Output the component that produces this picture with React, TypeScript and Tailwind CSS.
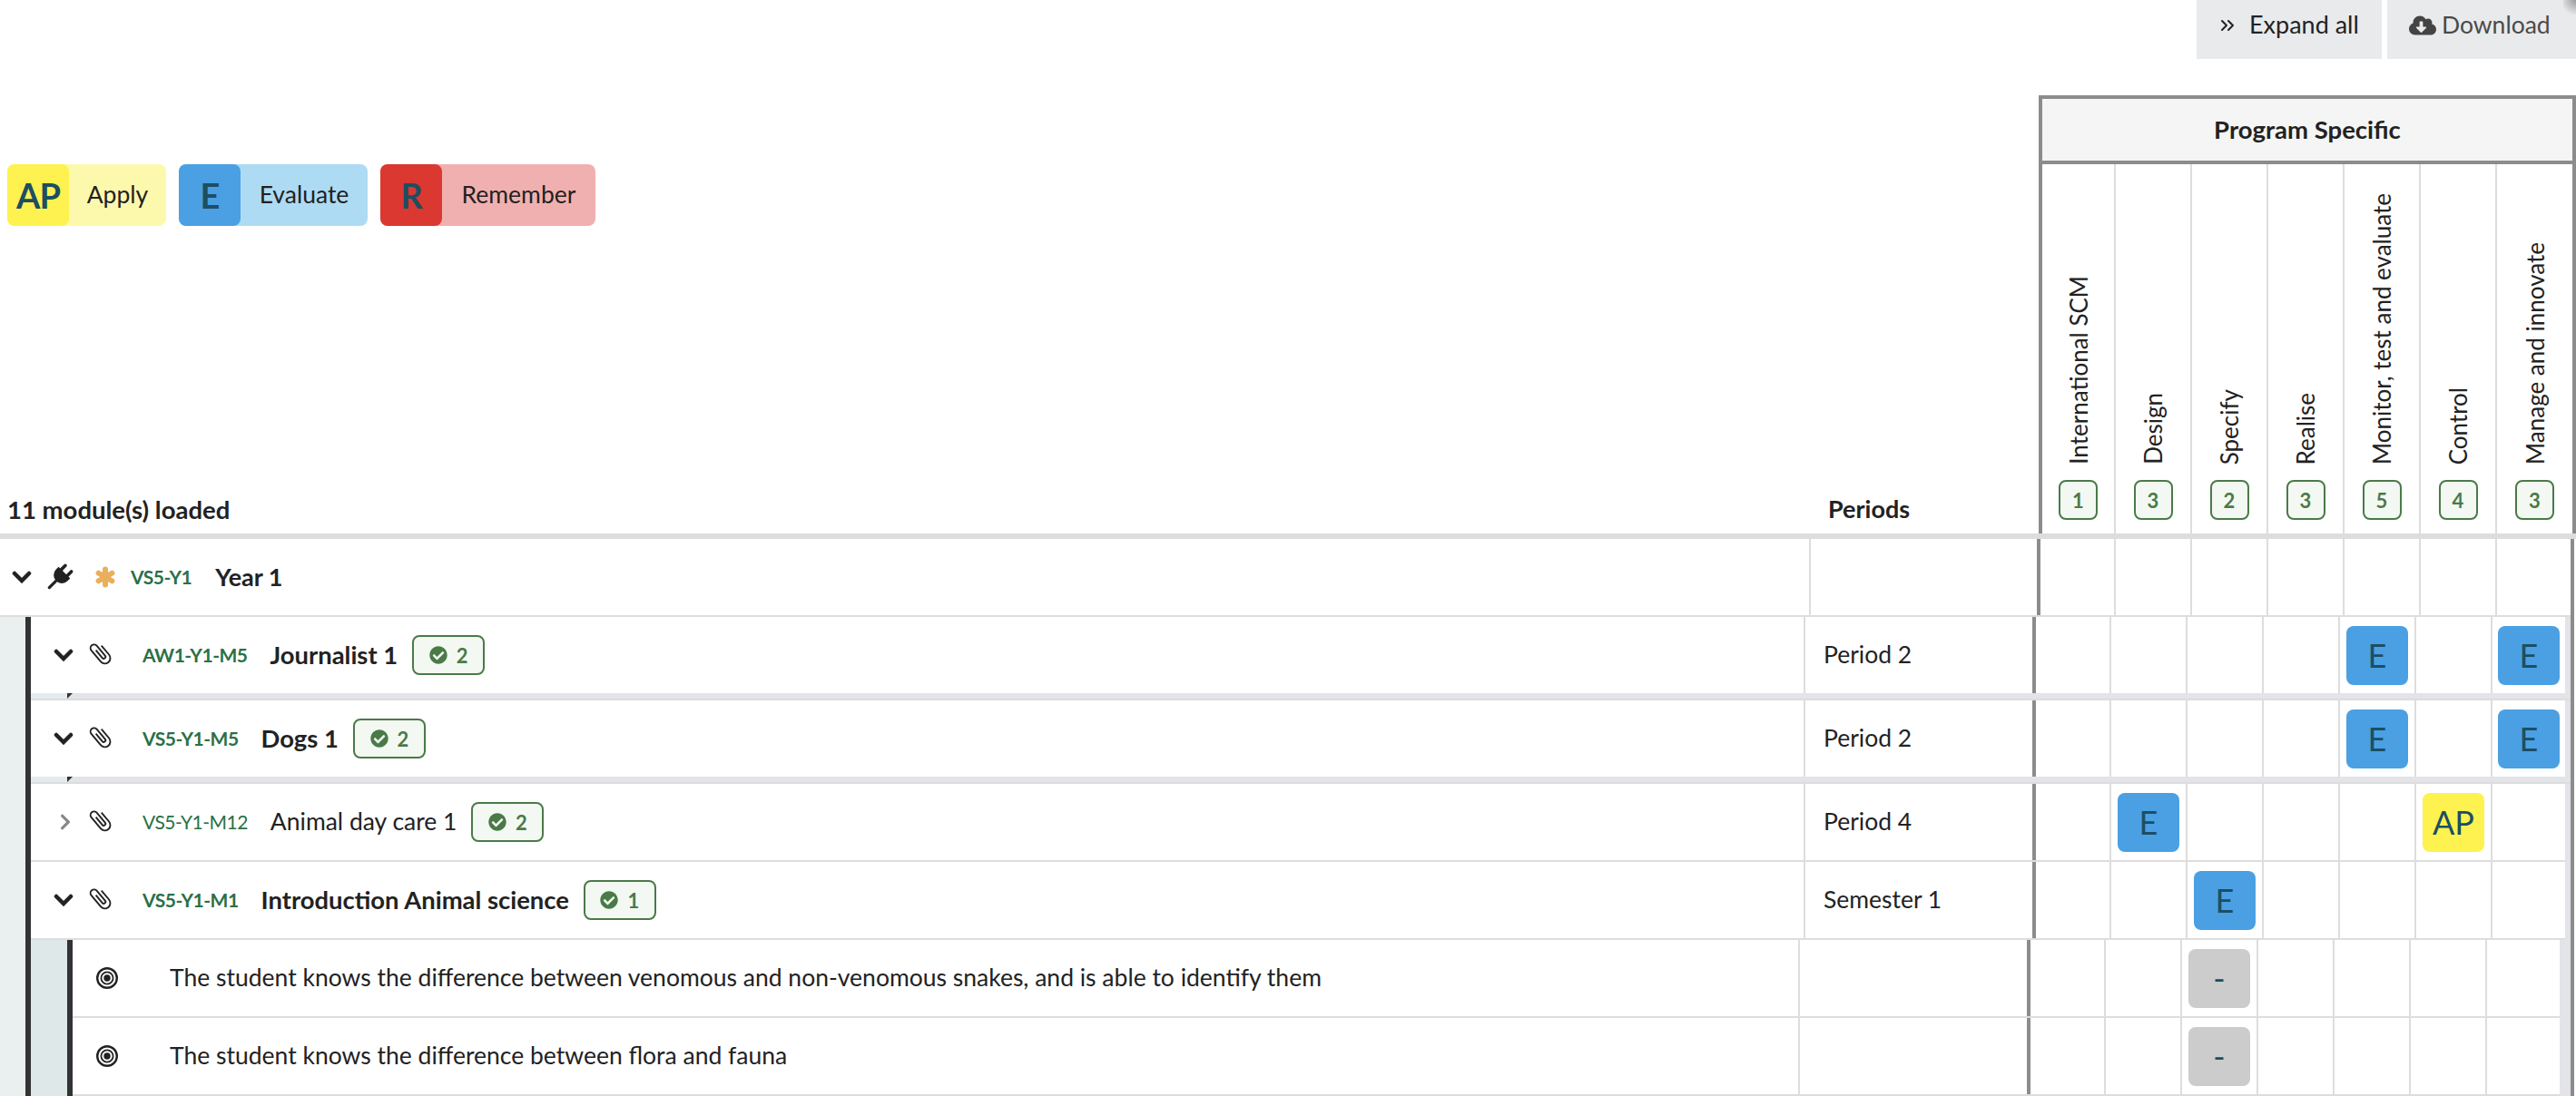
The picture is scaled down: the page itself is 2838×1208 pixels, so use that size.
import React from 'react';
import { FaChevronRight, FaCheckCircle, FaCloudDownloadAlt } from 'react-icons/fa';
import { LuChevronsRight } from 'react-icons/lu';

const font = "font-['Lato','Noto_Sans',sans-serif]";

const Chevron = () => (
  <svg width="22" height="14" viewBox="0 0 22 14" fill="none" stroke="#222222" strokeWidth="4.5" strokeLinecap="round" strokeLinejoin="miter">
    <path d="M3 3l8 8 8-8" />
  </svg>
);

const Clip = () => (
  <svg width="30" height="30" viewBox="-3 0 30 30" fill="none" stroke="#222222" strokeWidth="1.9" className="overflow-visible">
    <path transform="rotate(-40 12 15)" d="M10 9V20a2 2 0 0 0 4 0V6a4 4 0 0 0-8 0V22a6 6 0 0 0 12 0V9" />
  </svg>
);

const Plug = () => (
  <svg width="30" height="30" viewBox="0 0 30 30" className="overflow-visible">
    <g transform="rotate(45 15 15)" fill="#222222">
      <rect x="8.5" y="0" width="3.6" height="10" rx="1.8" />
      <rect x="17.9" y="0" width="3.6" height="10" rx="1.8" />
      <path d="M6 8H24V12A9 9 0 0 1 6 12Z" />
      <rect x="13.4" y="20" width="3.2" height="13" rx="1.2" />
    </g>
  </svg>
);

const Star = () => (
  <svg width="24" height="24" viewBox="0 0 24 24" stroke="#e9af5d" strokeWidth="6" strokeLinecap="round">
    <path d="M12 3.5V20.5" />
    <path d="M4.6 7.75L19.4 16.25" />
    <path d="M19.4 7.75L4.6 16.25" />
  </svg>
);

const Target = () => (
  <svg width="24" height="24" viewBox="0 0 24 24" fill="none" stroke="#222222">
    <circle cx="12" cy="12" r="10.8" strokeWidth="2.4" />
    <circle cx="12" cy="12" r="6.6" strokeWidth="1.8" />
    <circle cx="12" cy="12" r="3.7" fill="#222222" stroke="none" />
  </svg>
);

const Chip = ({ v }: { v?: string }) => {
  if (!v) return null;
  const bg = v === 'E' ? 'bg-[#4aa0e2]' : v === 'AP' ? 'bg-[#fdf24f]' : 'bg-[#cccccc]';
  return (
    <div className={`${bg} w-[68px] h-[65px] rounded-lg flex items-center justify-center text-[36px] text-[#1d4e63]`}>
      {v}
    </div>
  );
};

const Matrix = ({ cells, lastWidth = 'w-[82px]' }: { cells: (string | undefined)[]; lastWidth?: string }) => (
  <div className="flex h-full border-l-4 border-[#8c8c8c]">
    {cells.map((c, i) => (
      <div
        key={i}
        className={`h-full flex items-center justify-center ${i === 0 ? 'w-[81px]' : i === 6 ? `${lastWidth} border-l-2 border-[#dddddd]` : 'w-[84px] border-l-2 border-[#dddddd]'}`}
      >
        <Chip v={c} />
      </div>
    ))}
  </div>
);

const Count = ({ n }: { n: number }) => (
  <span className="ml-4 inline-flex items-center justify-center gap-[10px] w-[80px] h-[44px] rounded-lg border-2 border-[#4a7a48] bg-[#f3f8f2] text-[#4a7a48] text-[22px] font-bold">
    <FaCheckCircle size={20} />
    {n}
  </span>
);

const Band = () => (
  <div>
    <div className="flex h-1.5">
      <div className="w-[40px] bg-[#e3ecec]" />
      <div className="w-1.5 bg-[#333333] [clip-path:polygon(0_0,100%_0,0_100%)]" />
      <div className="flex-1" />
    </div>
    <div className="h-0.5 bg-[#dddddd]" />
  </div>
);

type RowProps = {
  code: string;
  name: string;
  bold?: boolean;
  period: string;
  cells: (string | undefined)[];
  closed?: boolean;
  count: number;
  band?: boolean;
};

const ModuleRow = ({ code, name, bold, period, cells, closed, count, band }: RowProps) => (
  <div>
    <div className="flex h-[84px] items-stretch bg-white w-[2792px]">
      <div className="flex items-center w-[1953px]">
        <span className="w-[62px] pl-[25px] flex items-center">
          {closed ? <span className="pl-[3px]"><FaChevronRight size={20} color="#888888" /></span> : <Chevron />}
        </span>
        <span className="mr-[31px] -mt-1"><Clip /></span>
        <span className={`text-[21px] tracking-[-0.5px] text-[#2a7046] mr-[25px] ${bold ? 'font-bold' : ''}`}>{code}</span>
        <span className={`text-[#222222] ${bold ? 'text-[27.4px] font-bold' : 'text-[26.5px]'}`}>{name}</span>
        <Count n={count} />
      </div>
      <div className="flex items-center w-[252px] border-l-2 border-[#dddddd] pl-5 text-[26.5px] text-[#222222]">{period}</div>
      <Matrix cells={cells} />
    </div>
    {band ? <Band /> : <div className="h-0.5 bg-[#dddddd] w-[2792px]" />}
  </div>
);

const GoalRow = ({ text }: { text: string }) => (
  <div>
    <div className="flex h-[84px] items-stretch bg-white w-[2740px]">
      <div className="flex items-center w-[1901px]">
        <span className="ml-[26px] mr-[57px] flex"><Target /></span>
        <span className="text-[26.5px] text-[#222222]">{text}</span>
      </div>
      <div className="w-[252px] border-l-2 border-[#dddddd]" />
      <Matrix cells={[undefined, undefined, '-', undefined, undefined, undefined, undefined]} />
    </div>
    <div className="h-0.5 bg-[#dddddd] w-[2740px]" />
  </div>
);

const columns = [
  ['International SCM', 1],
  ['Design', 3],
  ['Specify', 2],
  ['Realise', 3],
  ['Monitor, test and evaluate', 5],
  ['Control', 4],
  ['Manage and innovate', 3],
] as const;

const Legend = ({ short, label, bg, light, w }: { short: string; label: string; bg: string; light: string; w: string }) => (
  <div className={`${light} ${w} h-[68px] rounded-lg flex items-center`}>
    <span className={`${bg} w-[68px] h-full rounded-lg flex items-center justify-center text-[38px] font-bold tracking-[-1px] text-[#1d4e63]`}>{short}</span>
    <span className="flex-1 text-center text-[26.5px] text-[#222222]">{label}</span>
  </div>
);

export default function App() {
  return (
    <div className={`${font} relative w-[2838px] h-[1208px] overflow-hidden bg-white`}>
      <div className="flex justify-end gap-1.5 h-[65px]">
        <button className="w-[204px] bg-[#e9eaec] flex items-center pl-[22px] pb-[10px] gap-3 text-[27px] text-[#222222]">
          <LuChevronsRight size={24} /> Expand all
        </button>
        <button className="w-[208px] bg-[#e9eaec] flex items-center pl-[24px] pb-[10px] gap-[6px] text-[26.5px] text-[#4a4a4a]">
          <FaCloudDownloadAlt size={30} color="#444444" /> Download
        </button>
      </div>
      {/* corner shadow */}
      <div className="absolute top-0 right-0 w-[14px] h-[18px] bg-[radial-gradient(circle_at_top_right,#9a9a9a,transparent_75%)]" />

      {/* header */}
      <div className="flex h-[483px] mt-10">
        <div className="flex flex-col justify-between w-[2246px] pt-[76px] pb-[6px]">
          <div className="flex gap-[14px] pl-2">
            <Legend short="AP" label="Apply" bg="bg-[#fdf24f]" light="bg-[#fdf9ac]" w="w-[175px]" />
            <Legend short="E" label="Evaluate" bg="bg-[#4aa0e2]" light="bg-[#aedbf4]" w="w-[208px]" />
            <Legend short="R" label="Remember" bg="bg-[#da3831]" light="bg-[#f1b0b0]" w="w-[237px]" />
          </div>
          <div className="flex text-[27.5px] font-bold text-[#222222]">
            <span className="pl-2 w-[2014px]">11 module(s) loaded</span>
            <span className="text-[27px]">Periods</span>
          </div>
        </div>
        <div className="w-[592px]">
          <div className="h-[76px] border-4 border-[#8c8c8c] bg-[#f5f5f5] flex items-center justify-center text-[27.5px] font-bold text-[#222222]">
            Program Specific
          </div>
          <div className="flex h-[407px] border-x-4 border-[#8c8c8c]">
            {columns.map(([label, n], i) => (
              <div key={label} className={`flex flex-col items-center justify-end pb-[15px] ${i === 0 ? 'w-[79px]' : i === 6 ? 'w-[85px] border-l-2 border-[#dddddd]' : 'w-[84px] border-l-2 border-[#dddddd]'}`}>
                <span className="[writing-mode:vertical-rl] rotate-180 text-[26px] leading-none text-[#222222] mb-[17px] whitespace-nowrap">{label}</span>
                <span className="w-[43px] h-[44px] rounded-lg border-2 border-[#4a7a48] bg-[#f3f8f2] text-[#4a7a48] text-[22px] font-bold flex items-center justify-center">{n}</span>
              </div>
            ))}
          </div>
        </div>
      </div>
      <div className="h-1.5 bg-[#dddddd]" />

      <div className="w-[2836px] border-r-4 border-[#8c8c8c]">
        {/* year */}
        <div className="flex h-[84px] items-stretch">
          <div className="flex items-center w-[1993px]">
            <span className="pl-[13px] w-[51px] flex"><Chevron /></span>
            <span className="mr-[23px] flex"><Plug /></span>
            <span className="mr-[16px] flex"><Star /></span>
            <span className="text-[21px] tracking-[-0.5px] font-bold text-[#2a7046] mr-[26px]">VS5-Y1</span>
            <span className="text-[27px] font-bold text-[#222222]">Year 1</span>
          </div>
          <div className="w-[251px] border-l-2 border-[#dddddd]" />
          <Matrix lastWidth="w-[83px]" cells={[undefined, undefined, undefined, undefined, undefined, undefined, undefined]} />
        </div>
        <div className="h-0.5 bg-[#dddddd]" />

        {/* modules */}
        <div className="flex bg-[#e3e4e7]">
          <div className="w-[28px] bg-[#e9f0ef]" />
          <div className="flex-1 border-l-[6px] border-[#333333]">
            <ModuleRow code="AW1-Y1-M5" name="Journalist 1" bold count={2} period="Period 2" cells={[undefined, undefined, undefined, undefined, 'E', undefined, 'E']} band />
            <ModuleRow code="VS5-Y1-M5" name="Dogs 1" bold count={2} period="Period 2" cells={[undefined, undefined, undefined, undefined, 'E', undefined, 'E']} band />
            <ModuleRow code="VS5-Y1-M12" name="Animal day care 1" closed count={2} period="Period 4" cells={[undefined, 'E', undefined, undefined, undefined, 'AP', undefined]} />
            <ModuleRow code="VS5-Y1-M1" name="Introduction Animal science" bold count={1} period="Semester 1" cells={[undefined, undefined, 'E', undefined, undefined, undefined, undefined]} />
            <div className="flex">
              <div className="w-[40px] bg-[#dfe8e8]" />
              <div className="flex-1 border-l-[6px] border-[#333333]">
                <GoalRow text="The student knows the difference between venomous and non-venomous snakes, and is able to identify them" />
                <GoalRow text="The student knows the difference between flora and fauna" />
              </div>
            </div>
          </div>
        </div>
      </div>
    </div>
  );
}
